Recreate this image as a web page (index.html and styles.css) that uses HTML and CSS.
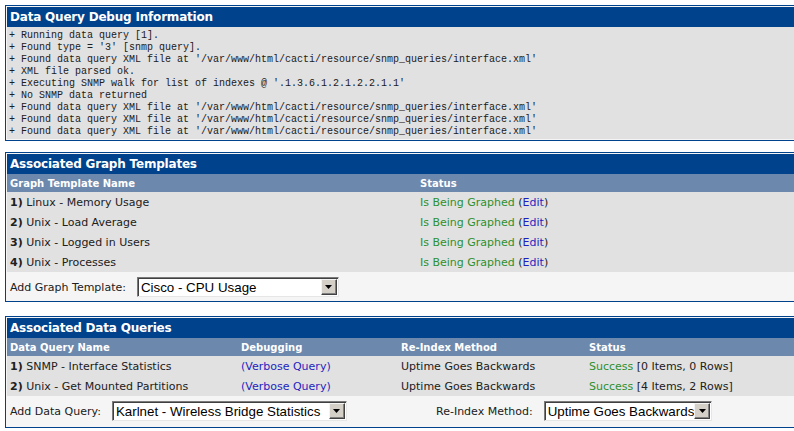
FILE: index.html
```html
<!DOCTYPE html>
<html>
<head>
<meta charset="utf-8">
<title>Data Query Debug</title>
<link rel="stylesheet" href="styles.css">
</head>
<body>
<section class="box box-debug">
  <div class="box-title">Data Query Debug Information</div>
  <pre class="debug">+ Running data query [1].
+ Found type = '3' [snmp query].
+ Found data query XML file at '/var/www/html/cacti/resource/snmp_queries/interface.xml'
+ XML file parsed ok.
+ Executing SNMP walk for list of indexes @ '.1.3.6.1.2.1.2.2.1.1'
+ No SNMP data returned
+ Found data query XML file at '/var/www/html/cacti/resource/snmp_queries/interface.xml'
+ Found data query XML file at '/var/www/html/cacti/resource/snmp_queries/interface.xml'
+ Found data query XML file at '/var/www/html/cacti/resource/snmp_queries/interface.xml'</pre>
</section>

<section class="box box-graphs">
  <div class="box-title">Associated Graph Templates</div>
  <div class="row head cols-graphs"><span>Graph Template Name</span><span>Status</span></div>
  <div class="row item cols-graphs"><span><b>1)</b> Linux - Memory Usage</span><span><span class="ok">Is Being Graphed</span> (<a class="link" href="#">Edit</a>)</span></div>
  <div class="row item cols-graphs"><span><b>2)</b> Unix - Load Average</span><span><span class="ok">Is Being Graphed</span> (<a class="link" href="#">Edit</a>)</span></div>
  <div class="row item cols-graphs"><span><b>3)</b> Unix - Logged in Users</span><span><span class="ok">Is Being Graphed</span> (<a class="link" href="#">Edit</a>)</span></div>
  <div class="row item cols-graphs"><span><b>4)</b> Unix - Processes</span><span><span class="ok">Is Being Graphed</span> (<a class="link" href="#">Edit</a>)</span></div>
  <div class="add-row">
    <span class="add-label">Add Graph Template:</span>
    <div class="select sel-template">
      <span class="select-text">Cisco - CPU Usage</span>
      <span class="select-btn"><svg width="7" height="4" viewBox="0 0 7 4"><path d="M0 0H7L3.5 4Z" fill="#000"/></svg></span>
    </div>
  </div>
</section>

<section class="box box-queries">
  <div class="box-title">Associated Data Queries</div>
  <div class="row head cols-queries"><span>Data Query Name</span><span>Debugging</span><span>Re-Index Method</span><span>Status</span></div>
  <div class="row item cols-queries"><span><b>1)</b> SNMP - Interface Statistics</span><span><a class="link" href="#">(Verbose Query)</a></span><span>Uptime Goes Backwards</span><span><span class="ok">Success</span> [0 Items, 0 Rows]</span></div>
  <div class="row item cols-queries"><span><b>2)</b> Unix - Get Mounted Partitions</span><span><a class="link" href="#">(Verbose Query)</a></span><span>Uptime Goes Backwards</span><span><span class="ok">Success</span> [4 Items, 2 Rows]</span></div>
  <div class="add-row add-row-queries">
    <div class="add-group add-first">
      <span class="add-label">Add Data Query:</span>
      <div class="select sel-query">
        <span class="select-text">Karlnet - Wireless Bridge Statistics</span>
        <span class="select-btn"><svg width="7" height="4" viewBox="0 0 7 4"><path d="M0 0H7L3.5 4Z" fill="#000"/></svg></span>
      </div>
    </div>
    <div class="add-group add-second">
      <span class="add-label">Re-Index Method:</span>
      <div class="select sel-reindex">
        <span class="select-text">Uptime Goes Backwards</span>
        <span class="select-btn"><svg width="7" height="4" viewBox="0 0 7 4"><path d="M0 0H7L3.5 4Z" fill="#000"/></svg></span>
      </div>
    </div>
  </div>
</section>
</body>
</html>
```

FILE: styles.css
```css
html {
  overflow: hidden;
  background: #ffffff;
}

body {
  margin: 0;
  padding: 5px 0 0 5px;
  font-family: "DejaVu Sans", Verdana, sans-serif;
  font-size: 11px;
  color: #202020;
}

.box {
  width: 800px;
  box-sizing: border-box;
  border: 1px solid #00438c;
  background: #f5f5f5;
  padding: 1px;
}

.box-graphs {
  margin-top: 11px;
}

.box-queries {
  margin-top: 14px;
}

.box-title {
  background: #00438c;
  color: #ffffff;
  font-weight: bold;
  font-size: 12px;
  letter-spacing: -0.2px;
  height: 20px;
  line-height: 20px;
  padding: 0 3px;
}

.debug {
  margin: 0;
  background: #e1e1e1;
  padding: 3px 2px 1px;
  font-family: "Liberation Mono", "Courier New", monospace;
  font-size: 10px;
  line-height: 12px;
  color: #202020;
}

.row {
  display: grid;
  align-items: center;
}

.row > span {
  padding: 0 3px;
  white-space: nowrap;
}

.head {
  background: #6d88ad;
  color: #ffffff;
  font-weight: bold;
  font-size: 10px;
  height: 18px;
}

.item {
  background: #e1e1e1;
  height: 20px;
}

.cols-graphs {
  grid-template-columns: 410px 1fr;
}

.cols-queries {
  grid-template-columns: 231px 160px 188px 1fr;
}

.ok {
  color: #2e902e;
}

.link {
  color: #1f1fbf;
  text-decoration: none;
}

.add-row {
  display: flex;
  align-items: center;
  padding: 5px 3px 3px;
}

.add-row-queries {
  padding: 5px 3px 5px;
}

.add-group {
  display: flex;
  align-items: center;
}

.add-first {
  flex: 0 0 426px;
}

.add-label {
  margin-right: 11px;
}

.select {
  display: flex;
  align-items: center;
  box-sizing: border-box;
  height: 20px;
  background: #ffffff;
  border-top: 1px solid #7a7a7a;
  border-left: 1px solid #7a7a7a;
  border-right: 1px solid #e6e6e6;
  border-bottom: 1px solid #e6e6e6;
  box-shadow: inset 1px 1px 0 #404040;
  font-family: "Liberation Sans", Arial, sans-serif;
  font-size: 13.33px;
  color: #000000;
}

.select-text {
  flex: 1;
  padding-left: 3px;
  white-space: nowrap;
}

.select-btn {
  flex: 0 0 16px;
  display: flex;
  align-items: center;
  justify-content: center;
  width: 16px;
  height: 16px;
  margin-right: 1px;
  box-sizing: border-box;
  background: #d4d0c8;
  border-top: 1px solid #f4f4f4;
  border-left: 1px solid #f4f4f4;
  border-right: 1px solid #404040;
  border-bottom: 1px solid #404040;
  box-shadow: inset -1px -1px 0 #808080;
}

.sel-template {
  width: 202px;
}

.sel-query {
  width: 235px;
}

.sel-reindex {
  width: 168px;
}
```
